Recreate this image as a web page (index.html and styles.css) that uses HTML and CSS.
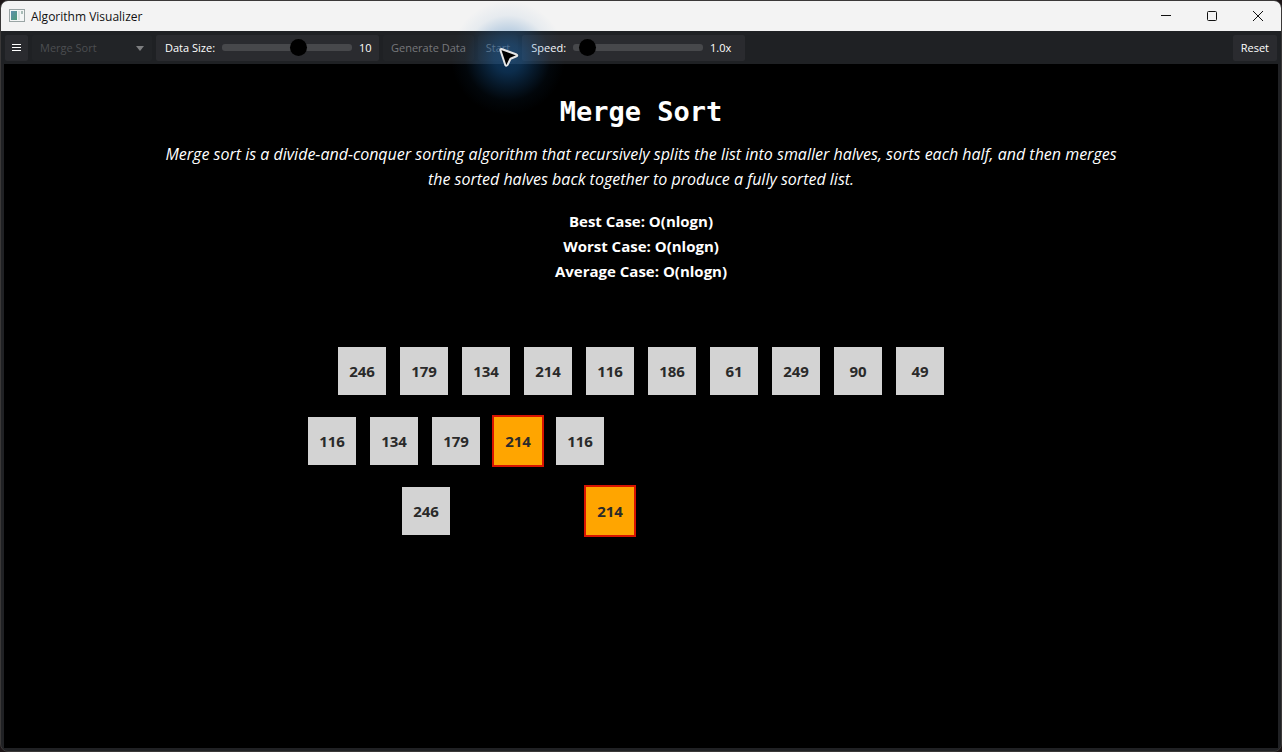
FILE: index.html
```
<!DOCTYPE html>
<html lang="en">
<head>
    <meta charset="utf-8">
    <meta name="viewport" content="width=device-width, initial-scale=1">
    <title>Algorithm Visualizer</title>
    <link rel="stylesheet" href="styles.css">
</head>
<body>
<div class="window">
    <header class="titlebar">
        <svg class="app-icon" width="16" height="14" viewBox="0 0 16 14">
            <defs>
                <linearGradient id="pane" x1="0" y1="0" x2="1" y2="1">
                    <stop offset="0" stop-color="#5f8fae"/>
                    <stop offset="1" stop-color="#4f9a78"/>
                </linearGradient>
            </defs>
            <rect x="0.5" y="0.5" width="15" height="12" fill="#f4f6f6" stroke="#9aa5a5"/>
            <rect x="2" y="2" width="6" height="9" fill="url(#pane)"/>
            <rect x="9" y="2" width="2" height="9" fill="#dde3e3"/>
            <rect x="12" y="2" width="2" height="3" fill="#a9bdb8"/>
        </svg>
        <span class="app-title">Algorithm Visualizer</span>
        <div class="window-controls">
            <button type="button" aria-label="Minimize">
                <svg width="12" height="12" viewBox="0 0 12 12"><path d="M1 5.5h10"/></svg>
            </button>
            <button type="button" aria-label="Maximize">
                <svg width="12" height="12" viewBox="0 0 12 12"><rect x="1.5" y="1.5" width="9" height="9" rx="1"/></svg>
            </button>
            <button type="button" aria-label="Close">
                <svg width="12" height="12" viewBox="0 0 12 12"><path d="M1 1l10 10M11 1L1 11"/></svg>
            </button>
        </div>
    </header>

    <div class="toolbar">
        <button type="button" class="tool menu-btn" aria-label="Menu">
            <svg width="9" height="9" viewBox="0 0 9 9"><path d="M0 1.5h9M0 4.5h9M0 7.5h9"/></svg>
        </button>
        <div class="combo">
            <select aria-label="Algorithm" disabled>
                <option>Merge Sort</option>
            </select>
            <svg class="combo-arrow" width="8" height="5" viewBox="0 0 8 5"><path d="M0 0h8L4 5z"/></svg>
        </div>
        <div class="tool slider-group">
            <label for="dataSize">Data Size:</label>
            <input type="range" id="dataSize" min="1" max="16" value="10">
            <output for="dataSize" id="dataSizeValue">10</output>
        </div>
        <button type="button" class="tool" disabled>Generate Data</button>
        <button type="button" class="tool" disabled>Start</button>
        <div class="tool slider-group">
            <label for="speed">Speed:</label>
            <input type="range" id="speed" min="0.5" max="10" step="0.5" value="1">
            <output for="speed" id="speedValue">1.0x</output>
        </div>
        <button type="button" class="tool reset-btn">Reset</button>
    </div>

    <!-- mouse pointer with its highlight -->
    <div class="pointer">
        <svg width="22" height="24" viewBox="0 0 22 24">
            <path d="M3.5 4.5Q3 3 4.5 3L19.500 8.500Q21 9.500 19.500 10.300L13.500 12.700L10.500 19Q9.300 20.500 8.300 19Z"/>
        </svg>
    </div>

    <main class="content">
        <h1>Merge Sort</h1>
        <p class="description">Merge sort is a divide-and-conquer sorting algorithm that recursively splits the list into smaller halves, sorts each half, and then merges the sorted halves back together to produce a fully sorted list.</p>
        <div class="complexity">
            <div>Best Case: O(nlogn)</div>
            <div>Worst Case: O(nlogn)</div>
            <div>Average Case: O(nlogn)</div>
        </div>

        <div class="visualization">
            <div class="row row-list">
                <div class="cell">246</div>
                <div class="cell">179</div>
                <div class="cell">134</div>
                <div class="cell">214</div>
                <div class="cell">116</div>
                <div class="cell">186</div>
                <div class="cell">61</div>
                <div class="cell">249</div>
                <div class="cell">90</div>
                <div class="cell">49</div>
            </div>
            <div class="row">
                <div class="cell">116</div>
                <div class="cell">134</div>
                <div class="cell">179</div>
                <div class="cell active">214</div>
                <div class="cell">116</div>
            </div>
            <div class="row row-merge">
                <div class="cell">246</div>
                <div class="cell active">214</div>
            </div>
        </div>
    </main>
</div>

<script>
    const dataSize = document.getElementById('dataSize');
    const speed = document.getElementById('speed');

    dataSize.addEventListener('input', () => {
        document.getElementById('dataSizeValue').textContent = dataSize.value;
    });

    speed.addEventListener('input', () => {
        document.getElementById('speedValue').textContent = Number(speed.value).toFixed(1) + 'x';
    });
</script>
</body>
</html>
```
FILE: styles.css
```
* {
    box-sizing: border-box;
}

body {
    margin: 0;
    background: #1c1517;
    font-family: 'Open Sans', 'Noto Sans', sans-serif;
    color: white;
}

.window {
    position: relative;
    display: flex;
    flex-direction: column;
    min-height: 100vh;
    border: 1px solid #3a3838;
    border-radius: 8px;
    background: #202124;
    overflow: hidden;
}

.titlebar {
    display: flex;
    align-items: center;
    height: 30px;
    padding-left: 8px;
    background: #f3f3f3;
    color: #111;
    font-size: 12px;
}

.app-title {
    margin-left: 6px;
}

.window-controls {
    display: flex;
    margin-left: auto;
}

.window-controls button {
    display: flex;
    align-items: center;
    justify-content: center;
    width: 46px;
    height: 28px;
    padding: 0;
    border: none;
    background: none;
}

.window-controls svg {
    fill: none;
    stroke: #111;
}

.toolbar {
    display: flex;
    align-items: center;
    gap: 4px;
    height: 33px;
    padding: 0 4px;
    background: #1f2124;
}

.tool {
    height: 26px;
    padding: 0 8px;
    border: none;
    border-radius: 2px;
    background: #2a2b2f;
    color: white;
    font-family: inherit;
    font-size: 11px;
    white-space: nowrap;
}

.tool:disabled {
    background: #222427;
    color: #77787b;
}

.menu-btn {
    display: flex;
    align-items: center;
    justify-content: center;
    width: 23px;
    padding: 0;
}

.menu-btn svg {
    stroke: white;
}

.combo {
    position: relative;
    width: 120px;
    height: 26px;
}

.combo select {
    appearance: none;
    width: 100%;
    height: 100%;
    padding: 0 8px;
    border: none;
    border-radius: 2px;
    background: #222427;
    color: #4c4e51;
    font-family: inherit;
    font-size: 11px;
    opacity: 1;
}

.combo-arrow {
    position: absolute;
    top: 11px;
    right: 8px;
    fill: #7d7e80;
    pointer-events: none;
}

.slider-group {
    display: flex;
    align-items: center;
    gap: 7px;
    width: 223px;
    padding: 0 9px;
}

.slider-group input {
    appearance: none;
    flex: none;
    width: 130px;
    height: 17px;
    margin: 0;
    background: none;
}

.slider-group input::-webkit-slider-runnable-track {
    height: 7px;
    border-radius: 3px;
    background: #47484b;
}

.slider-group input::-webkit-slider-thumb {
    appearance: none;
    width: 17px;
    height: 17px;
    margin-top: -5px;
    border-radius: 50%;
    background: black;
}

.reset-btn {
    margin-left: auto;
}

.pointer {
    position: absolute;
    top: 0;
    left: 450px;
    display: flex;
    align-items: center;
    justify-content: center;
    width: 114px;
    height: 114px;
    background: radial-gradient(closest-side, rgba(28, 104, 176, 0.5), rgba(28, 104, 176, 0.43) 25%, rgba(28, 104, 176, 0.24) 50%, rgba(28, 104, 176, 0.06) 75%, transparent);
    pointer-events: none;
}

.pointer path {
    fill: black;
    stroke: #e6e6e6;
    stroke-width: 2;
    stroke-linejoin: round;
}

.content {
    flex: 1;
    margin: 0 3px 3px;
    padding: 28px 20px;
    background: black;
    text-align: center;
}

h1 {
    margin: 0;
    font-family: 'DejaVu Sans Mono', monospace;
    font-size: 27px;
    line-height: 40px;
}

.description {
    max-width: 960px;
    margin: 10px auto 0;
    font-size: 16px;
    font-style: italic;
    line-height: 25px;
}

.complexity {
    margin-top: 17px;
    font-size: 15px;
    font-weight: bold;
    line-height: 25px;
}

.visualization {
    display: flex;
    flex-direction: column;
    gap: 18px;
    width: 670px;
    margin: 61px auto 0;
}

.row {
    display: flex;
    gap: 10px;
}

.row-list {
    justify-content: center;
}

/* merged pieces line up under the half they belong to */
.row-merge {
    gap: 132px;
    padding-left: 94px;
}

.cell {
    width: 52px;
    height: 52px;
    border: 2px solid black;
    background: lightgray;
    color: #2a2a2a;
    font-size: 15px;
    font-weight: bold;
    line-height: 48px;
}

.cell.active {
    border-color: #d81400;
    background: orange;
}
```
